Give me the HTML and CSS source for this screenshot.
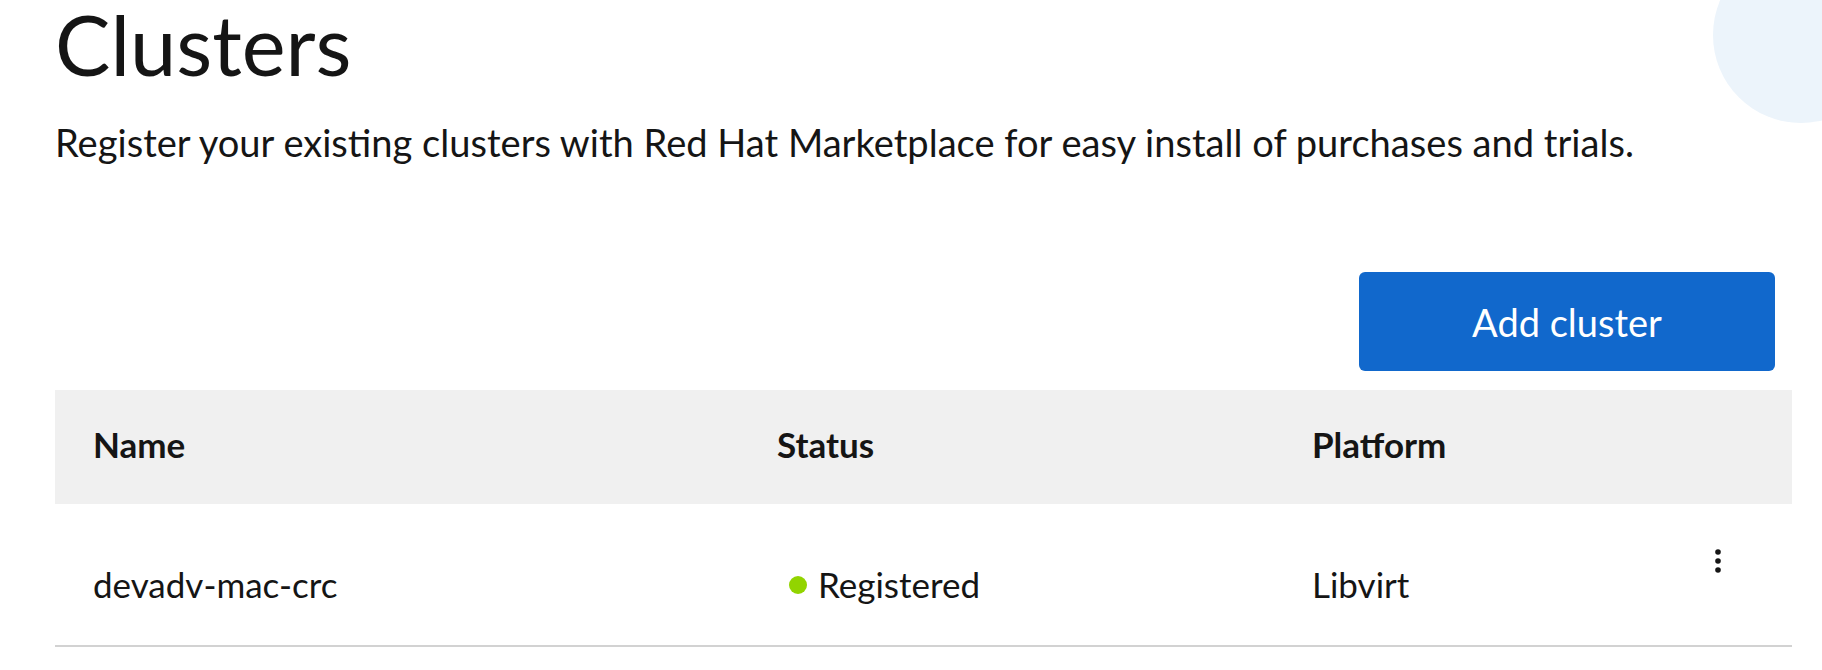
FILE: index.html
```html
<!DOCTYPE html>
<html lang="en">
<head>
<meta charset="utf-8">
<title>Clusters</title>
<link rel="stylesheet" href="styles.css">
</head>
<body>
<div class="page">
  <div class="deco"></div>
  <h1 class="title">Clusters</h1>
  <p class="subtitle">Register your existing clusters with Red Hat Marketplace for easy install of purchases and trials.</p>
  <div class="toolbar">
    <button class="btn-primary" type="button">Add cluster</button>
  </div>
  <table class="table">
    <colgroup>
      <col class="c-name">
      <col class="c-status">
      <col class="c-platform">
      <col class="c-action">
    </colgroup>
    <thead>
      <tr>
        <th>Name</th>
        <th>Status</th>
        <th>Platform</th>
        <th></th>
      </tr>
    </thead>
    <tbody>
      <tr>
        <td>devadv-mac-crc</td>
        <td><span class="dot"></span>Registered</td>
        <td>Libvirt</td>
        <td class="action">
          <svg class="kebab" width="6" height="24" viewBox="0 0 6 24" aria-hidden="true">
            <circle cx="3" cy="3" r="2.8" fill="#151515"/>
            <circle cx="3" cy="12" r="2.8" fill="#151515"/>
            <circle cx="3" cy="21" r="2.8" fill="#151515"/>
          </svg>
        </td>
      </tr>
    </tbody>
  </table>
</div>
</body>
</html>
```
FILE: styles.css
```css
html, body {
  margin: 0;
  padding: 0;
  background: #ffffff;
}

body {
  font-family: "Lato", "Open Sans", sans-serif;
  color: #151515;
  overflow: hidden;
}

.page {
  position: relative;
  padding: 2px 30px 0 55px;
}

.deco {
  position: absolute;
  left: 1713px;
  top: -53px;
  width: 176px;
  height: 176px;
  border-radius: 50%;
  background: #ecf4fb;
}

.title {
  position: relative;
  margin: 0;
  font-size: 83px;
  line-height: 84px;
  font-weight: 400;
  letter-spacing: 0;
}

.subtitle {
  position: relative;
  margin: 28px 0 0 0;
  font-size: 38.1px;
  line-height: 56px;
  font-weight: 400;
}

.toolbar {
  display: flex;
  justify-content: flex-end;
  margin-top: 102px;
  padding-right: 17px;
}

.btn-primary {
  width: 416px;
  height: 99px;
  border: 0;
  border-radius: 6px;
  background: #1168cc;
  color: #ffffff;
  font-family: inherit;
  font-size: 38px;
  font-weight: 400;
  display: flex;
  align-items: center;
  justify-content: center;
  padding: 0;
}

.table {
  margin-top: 19px;
  width: 1737px;
  border-collapse: collapse;
  table-layout: fixed;
}

.c-name { width: 684px; }
.c-status { width: 535px; }
.c-platform { width: 406px; }
.c-action { width: 112px; }

.table thead tr {
  background: #f0f0f0;
}

.table th {
  text-align: left;
  font-size: 35px;
  font-weight: 700;
  line-height: 40px;
  padding: 34px 0 40px 38px;
  vertical-align: top;
}

.table tbody tr {
  border-bottom: 2px solid #d2d2d2;
}

.table td {
  font-size: 35px;
  line-height: 48px;
  padding: 56px 0 37px 38px;
  vertical-align: top;
}

.table td.action {
  padding: 45px 0 0 35px;
}

.kebab {
  display: block;
}

.dot {
  display: inline-block;
  width: 18px;
  height: 18px;
  border-radius: 50%;
  background: #92d400;
  margin: 0 11px 0 12px;
  vertical-align: 4px;
}
```
